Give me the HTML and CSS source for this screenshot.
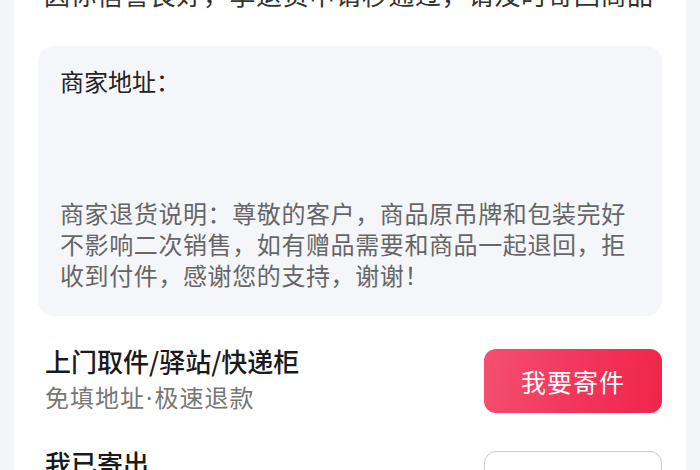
FILE: index.html
```html
<!DOCTYPE html>
<html lang="zh-CN">
<head>
<meta charset="utf-8">
<link rel="stylesheet" href="styles.css">
</head>
<body>
<div class="card">
  <div class="notice">因你信誉良好，享退货申请秒通过，请及时寄回商品</div>
  <div class="addr-box">
    <div class="addr-label">商家地址：</div>
    <div class="addr-desc">商家退货说明：尊敬的客户，商品原吊牌和包装完好不影响二次销售，如有赠品需要和商品一起退回，拒收到付件，感谢您的支持，谢谢！</div>
  </div>
  <div class="row">
    <div class="row-text">
      <div class="row-title">上门取件/驿站/快递柜</div>
      <div class="row-sub">免填地址<span class="dot">·</span>极速退款</div>
    </div>
    <div class="btn btn-primary">我要寄件</div>
  </div>
  <div class="row row-second">
    <div class="row-text">
      <div class="row-title">我已寄出</div>
      <div class="row-sub">填写物流单号</div>
    </div>
    <div class="btn btn-outline">填写单号</div>
  </div>
</div>
</body>
</html>
```
FILE: styles.css
```css
html, body {
  margin: 0;
  padding: 0;
}
body {
  background: #f4f5f8;
  font-family: "Noto Sans CJK SC", "Noto Sans", sans-serif;
  width: 700px;
  height: 470px;
  overflow: hidden;
}
.card {
  margin: 0 14px;
  background: #ffffff;
  padding: 0 24px;
  height: 470px;
  box-sizing: border-box;
  overflow: hidden;
}
.notice {
  font-size: 26px;
  line-height: 36px;
  margin-top: -24px;
  padding-left: 6px;
  color: #333333;
  letter-spacing: 0.5px;
  white-space: nowrap;
}
.addr-box {
  margin-top: 34px;
  height: 270px;
  box-sizing: border-box;
  background: #f5f6fa;
  border-radius: 16px;
  padding: 19px 22px 26px;
  display: flex;
  flex-direction: column;
  justify-content: space-between;
}
.addr-label {
  font-size: 24px;
  line-height: 32px;
  color: #222222;
}
.addr-desc {
  font-size: 24px;
  line-height: 31px;
  color: #666666;
  letter-spacing: 0.6px;
}
.row {
  display: flex;
  align-items: center;
  justify-content: space-between;
  margin-top: 30px;
}
.row-second {
  margin-top: 32px;
}
.row-text {
  padding-left: 7px;
}
.row-title {
  font-size: 26px;
  line-height: 36px;
  margin-top: -3px;
  color: #1a1a1a;
  font-weight: 500;
}
.row-sub {
  font-size: 24px;
  line-height: 36px;
  color: #777777;
  letter-spacing: 1px;
}
.dot {
  font-family: "Noto Sans", sans-serif;
  margin: 0 1px;
}
.btn {
  width: 178px;
  height: 64px;
  box-sizing: border-box;
  border-radius: 12px;
  display: flex;
  align-items: center;
  justify-content: center;
  font-size: 25px;
  letter-spacing: 1px;
}
.btn-primary {
  background: linear-gradient(100deg, #f4506f 0%, #f2355a 55%, #ef2549 100%);
  color: #ffffff;
}
.btn-outline {
  background: #ffffff;
  border: 1.5px solid #cccccc;
  color: #333333;
}
```
